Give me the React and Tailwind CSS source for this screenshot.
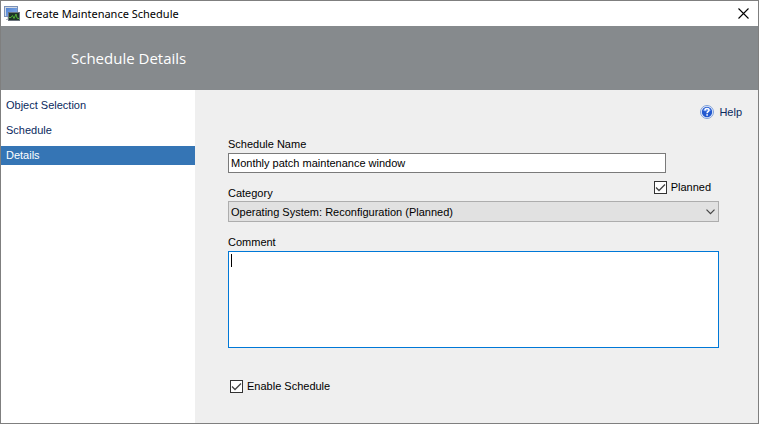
import { useState } from "react";

const steps = ["Object Selection", "Schedule", "Details"];

function AppIcon() {
  return (
    <svg width="16" height="16" viewBox="0 0 16 16" aria-hidden="true" className="shrink-0">
      <defs>
        <linearGradient id="screen" x1="0" y1="0" x2="1" y2="1">
          <stop offset="0" stopColor="#4f80d0" />
          <stop offset="1" stopColor="#8ab6f2" />
        </linearGradient>
      </defs>
      <rect x="0.500" y="0.500" width="13" height="10" fill="#d3d9e2" stroke="#7a90b5" />
      <rect x="2" y="2" width="11" height="8" fill="url(#screen)" />
      <path d="M2 13.500h3M3 12h2" stroke="#b3bac3" />
      <rect x="4.500" y="6.500" width="11" height="8" fill="#1d3428" stroke="#6b737c" />
      <path d="M5 11.500h2l1.500-2 1.500 3 2-4.500 1 4 1 .5h1" fill="none" stroke="#4fae35" />
    </svg>
  );
}

function HelpIcon() {
  return (
    <svg width="14" height="14" viewBox="0 0 14 14" aria-hidden="true" className="shrink-0">
      <circle cx="7" cy="7" r="6.500" fill="#e8effb" stroke="#7e9fd8" />
      <circle cx="7" cy="7" r="5.200" fill="#2258cf" />
      <path d="M3 5.500a4.300 4.300 0 0 1 8 0c-2 1.200-6 1.200-8 0z" fill="#5f8fec" />
      <path d="M5 5.500c0-2.600 4-2.500 4-.3 0 1.500-1.900 1.500-1.900 3" fill="none" stroke="#fff" strokeWidth="1.500" />
      <rect x="6.300" y="9.200" width="1.600" height="1.500" fill="#fff" />
    </svg>
  );
}

function CheckBox({ id, label, checked, onChange }) {
  return (
    <label htmlFor={id} className="flex items-center gap-1 text-[#000]">
      <span className="grid h-[13px] w-[13px] shrink-0">
        <input
          id={id}
          type="checkbox"
          checked={checked}
          onChange={(e) => onChange(e.target.checked)}
          className="peer col-start-1 row-start-1 h-[13px] w-[13px] appearance-none border border-[#333] bg-white"
        />
        <svg
          viewBox="0 0 13 13"
          aria-hidden="true"
          className="pointer-events-none invisible col-start-1 row-start-1 h-[13px] w-[13px] peer-checked:visible"
        >
          <path d="M2 6.500l3 3 6-6" fill="none" stroke="#444" strokeWidth="1.300" />
        </svg>
      </span>
      {label}
    </label>
  );
}

export default function App() {
  const [step, setStep] = useState("Details");
  const [name, setName] = useState("Monthly patch maintenance window");
  const [planned, setPlanned] = useState(true);
  const [enabled, setEnabled] = useState(true);
  const [comment, setComment] = useState("");

  return (
    <div className="flex min-h-screen flex-col border border-[#7f7f7f] bg-[#efefef] font-['Liberation_Sans',Arial,sans-serif] text-[11px] leading-4 text-black">
      <div className="flex h-[25px] items-center bg-white pr-[9px] pl-[3px]">
        <AppIcon />
        <h1 className="ml-[5px] flex-1 font-['Noto_Sans','Open_Sans',sans-serif] text-[11px]">
          Create Maintenance Schedule
        </h1>
        <button type="button" aria-label="Close" className="flex h-4 w-3 items-center justify-center">
          <svg width="11" height="11" viewBox="0 0 11 11" aria-hidden="true">
            <path d="M.5.5l10 10M10.500.5l-10 10" stroke="#000" strokeWidth="1.100" />
          </svg>
        </button>
      </div>
      <header className="flex h-16 items-center bg-[#868a8d] px-[70px]">
        <h2 className="font-['Open_Sans','Noto_Sans',sans-serif] text-[15px] text-white">Schedule Details</h2>
      </header>
      <div className="flex flex-1">
        <nav className="flex w-[194px] shrink-0 flex-col gap-[6px] bg-white pt-[6px]">
          {steps.map((s) => (
            <button
              key={s}
              type="button"
              onClick={() => setStep(s)}
              className={`h-[19px] px-[5px] pb-[2px] text-left ${s === step ? "bg-[#3575b5] text-white" : "text-[#0a2a5e]"}`}
            >
              {s}
            </button>
          ))}
        </nav>
        <main className="flex flex-1 flex-col pt-[14px] pl-[33px]">
          <a href="#help" className="mr-4 flex items-center gap-[5px] self-end text-[#0a2a5e]">
            <HelpIcon />
            Help
          </a>
          <form className="mt-4 mr-[39px] flex flex-col">
            <label htmlFor="name">Schedule Name</label>
            <input
              id="name"
              value={name}
              onChange={(e) => setName(e.target.value)}
              className="mt-px mr-[53px] h-5 border border-[#7a7a7a] bg-white px-[2px]"
            />
            <div className="mt-[6px] flex h-[22px] justify-between">
              <label htmlFor="category" className="self-end">
                Category
              </label>
              <div className="mr-2">
                <CheckBox id="planned" label="Planned" checked={planned} onChange={setPlanned} />
              </div>
            </div>
            <div className="grid">
              <select
                id="category"
                className="col-start-1 row-start-1 h-[21px] appearance-none border border-[#adadad] bg-[#e1e1e1] px-[2px]"
              >
                <option>Operating System: Reconfiguration (Planned)</option>
              </select>
              <svg
                width="9"
                height="6"
                viewBox="0 0 9 6"
                aria-hidden="true"
                className="pointer-events-none col-start-1 row-start-1 mr-1 self-center justify-self-end"
              >
                <path d="M.5.7l4 4 4-4" fill="none" stroke="#444" strokeWidth="1.200" />
              </svg>
            </div>
            <label htmlFor="comment" className="mt-3">
              Comment
            </label>
            <div className="relative mt-px flex">
              <textarea
                id="comment"
                value={comment}
                onChange={(e) => setComment(e.target.value)}
                className="h-[97px] flex-1 resize-none border border-[#0078d7] bg-white px-[2px] py-px caret-transparent outline-none"
              />
              <span className="pointer-events-none absolute top-[3px] left-[3px] h-[13px] w-px bg-black" />
            </div>
            <div className="mt-[30px] ml-[2px] flex">
              <CheckBox id="enabled" label="Enable Schedule" checked={enabled} onChange={setEnabled} />
            </div>
          </form>
        </main>
      </div>
    </div>
  );
}
